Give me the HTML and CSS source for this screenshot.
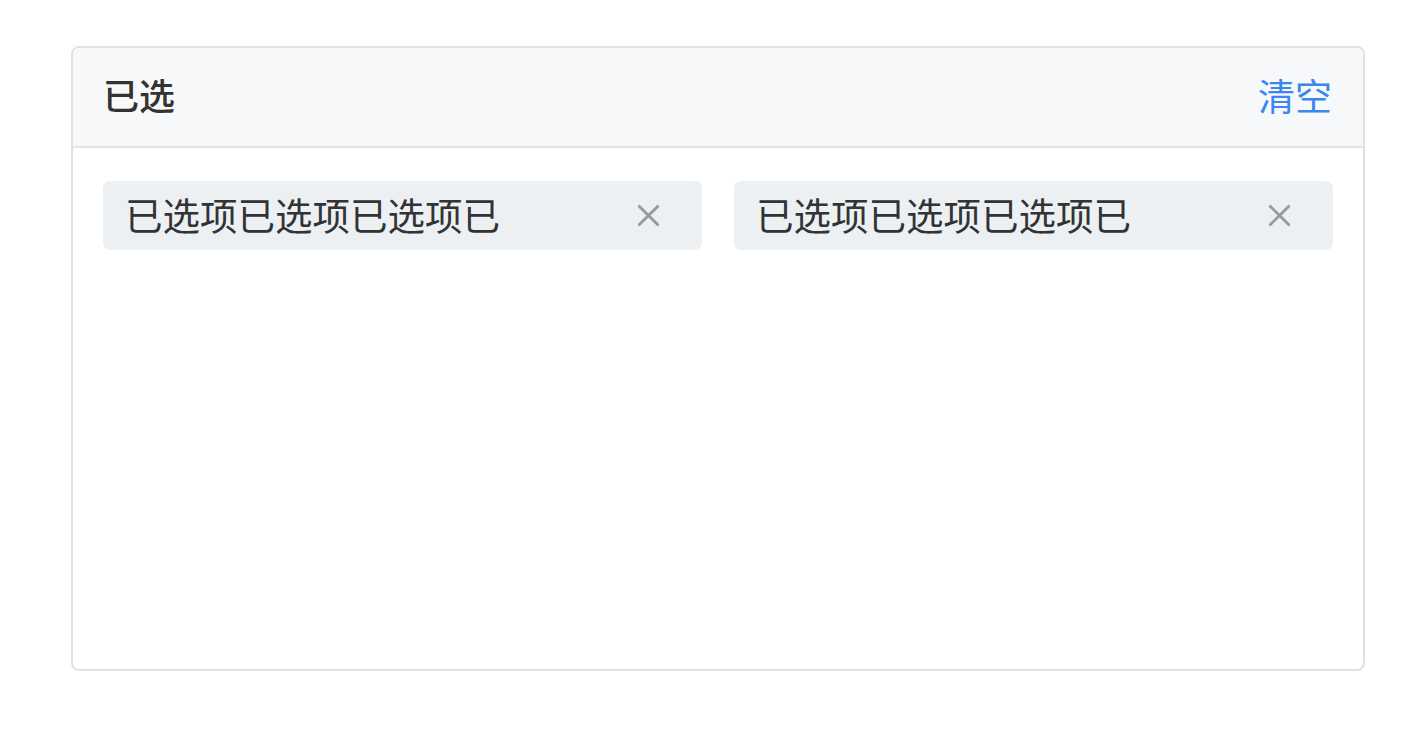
FILE: index.html
```html
<!DOCTYPE html>
<html lang="zh">
<head>
<meta charset="utf-8">
<link rel="stylesheet" href="styles.css">
</head>
<body>
<div class="page">
  <div class="card">
    <div class="card-header">
      <span class="title">已选</span>
      <span class="clear">清空</span>
    </div>
    <div class="card-body">
      <div class="tag">
        <span class="tag-text">已选项已选项已选项已</span>
        <svg class="close" viewBox="0 0 24 24" width="24" height="24"><path d="M2.5 2.5 L21.5 21.5 M21.5 2.5 L2.5 21.5" stroke="#999999" stroke-width="3" stroke-linecap="round" fill="none"/></svg>
      </div>
      <div class="tag">
        <span class="tag-text">已选项已选项已选项已</span>
        <svg class="close" viewBox="0 0 24 24" width="24" height="24"><path d="M2.5 2.5 L21.5 21.5 M21.5 2.5 L2.5 21.5" stroke="#999999" stroke-width="3" stroke-linecap="round" fill="none"/></svg>
      </div>
    </div>
  </div>
</div>
</body>
</html>
```
FILE: styles.css
```css
* { box-sizing: border-box; }
html, body { margin: 0; padding: 0; background: #ffffff; }
body {
  font-family: "Noto Sans CJK SC", "Noto Sans", sans-serif;
  color: #333333;
}
.page {
  padding: 46px 53px 0 71px;
}
.card {
  width: 1294px;
  height: 625px;
  border: 2px solid #dfe1e5;
  border-radius: 8px;
  overflow: hidden;
  display: flex;
  flex-direction: column;
}
.card-header {
  height: 100px;
  flex: none;
  background: #f7f8fa;
  border-bottom: 2px solid #e3e5e8;
  display: flex;
  align-items: center;
  justify-content: space-between;
  padding: 0 31px 4px 30px;
}
.title {
  font-size: 36px;
  line-height: 1.2;
  font-weight: 500;
  color: #333333;
}
.clear {
  font-size: 37px;
  line-height: 1.2;
  color: #3a87f0;
}
.card-body {
  padding: 33px 30px;
  display: grid;
  grid-template-columns: 1fr 1fr;
  column-gap: 32px;
  align-content: start;
  flex: 1;
}
.tag {
  height: 69px;
  background: #edf0f3;
  border-radius: 7px;
  display: flex;
  align-items: center;
  justify-content: space-between;
  padding: 0 42px 4px 22px;
}
.tag-text {
  font-size: 37.5px;
  line-height: 1.2;
  color: #333333;
  white-space: nowrap;
}
.close {
  width: 23px;
  height: 23px;
  flex: none;
  margin-top: 4px;
}
```
